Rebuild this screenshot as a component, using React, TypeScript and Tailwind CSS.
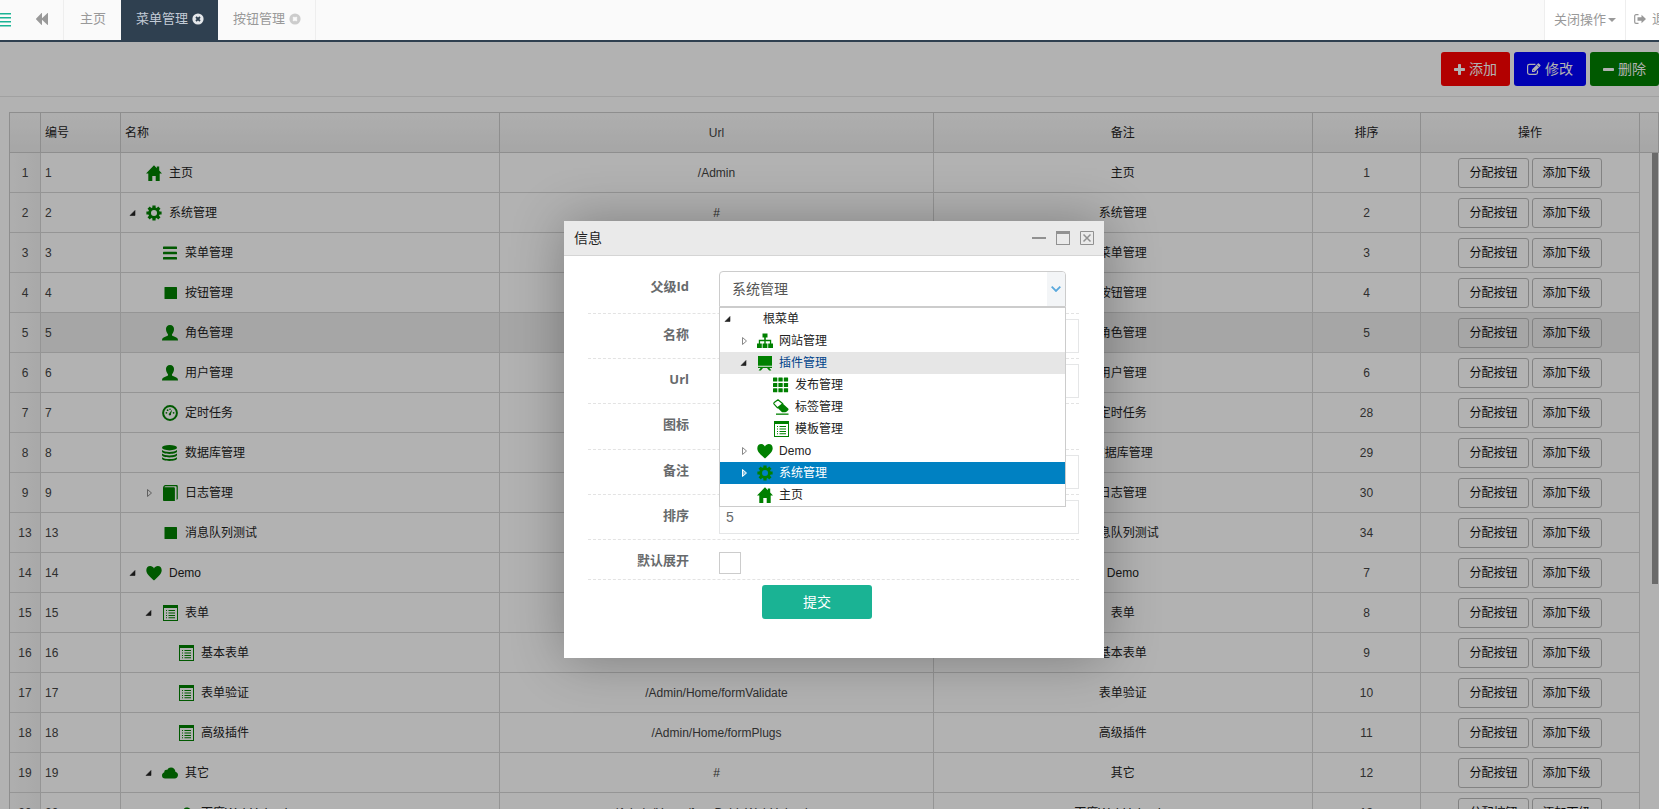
import React from 'react';

type IconName =
  | 'home' | 'cog' | 'menu' | 'stop' | 'user' | 'dashboard' | 'database' | 'book'
  | 'heart' | 'list' | 'cloud' | 'sitemap' | 'board' | 'grid' | 'eraser' | 'none';

type Hit = 'open' | 'closed' | 'none';

const shapes: Record<IconName, React.ReactNode> = {
  none: null,
  home: <path d="M8 .2 0 8.400h2.300V16h4v-5h3.400v5h4V8.400H16L13.200 5.600V1.600h-2.400v1.600z" />,
  cog: (
    <g>
      <circle cx="8" cy="8" r="4.400" fill="none" stroke="currentColor" strokeWidth="2.800" />
      {[0, 45, 90, 135].map((a) => (
        <g key={a} transform={`rotate(${a} 8 8)`}>
          <path d="M6.400.4h3.200v2.800H6.400zM6.400 12.800h3.200v2.800H6.400z" />
        </g>
      ))}
    </g>
  ),
  menu: (
    <g>
      <rect x="1" y="1.500" width="14" height="2.600" rx=".6" />
      <rect x="1" y="6.700" width="14" height="2.600" rx=".6" />
      <rect x="1" y="11.900" width="14" height="2.600" rx=".6" />
    </g>
  ),
  stop: <rect x="2.500" y="2" width="12.500" height="12" rx=".5" />,
  user: (
    <path d="M8 0c2.600 0 4 1.700 4 4.100 0 2-.7 3.800-1.800 4.900-.4.500-.3 1.400.2 1.700 2.300 1.100 5 2 5.300 3 .2.600.3 1.300.3 1.800H0c0-.5.100-1.200.3-1.800.3-1 3-1.900 5.300-3 .5-.3.600-1.200.2-1.700C4.700 7.900 4 6.100 4 4.100 4 1.700 5.400 0 8 0z" />
  ),
  dashboard: (
    <g>
      <circle cx="8" cy="8" r="6.900" fill="none" stroke="currentColor" strokeWidth="2" />
      <circle cx="4.400" cy="7.800" r=".9" />
      <circle cx="5.600" cy="5.200" r=".9" />
      <circle cx="8" cy="4.200" r=".8" />
      <circle cx="11.600" cy="7.800" r=".9" />
      <path d="M10.200 4.400 9 8.800a1.200 1.200 0 1 1-1.700-.6z" />
    </g>
  ),
  database: (
    <g>
      <ellipse cx="7.500" cy="2.700" rx="7.500" ry="2.700" />
      <path d="M0 5c1.200 1.300 4.300 1.900 7.500 1.900S13.800 6.300 15 5v1.500c0 1.400-3.200 2.400-7.500 2.400S0 7.900 0 6.500zM0 8.600c1.200 1.300 4.300 1.900 7.500 1.900s6.300-.6 7.500-1.900v1.500c0 1.400-3.200 2.400-7.500 2.400S0 11.500 0 10.100zM0 12.200c1.200 1.300 4.300 1.900 7.500 1.900s6.300-.6 7.500-1.900v1.400c0 1.400-3.200 2.400-7.500 2.400S0 15 0 13.600z" />
    </g>
  ),
  book: (
    <path d="M3.500 0H14.500c1 0 1.300.6 1.300 1.500V14l-1.200 1V2.500c0-.8-.4-1.200-1.100-1.200H3.600c-.6 0-.9.400-1.200.9h9.300c.7 0 1.200.5 1.200 1.200V16H2.200C1.400 16 1 15.500 1 14.700V3c0-1.500 1-3 2.500-3z" />
  ),
  heart: (
    <path d="M8 15.500C5 12.400.3 9.500.3 5.200.3 2.700 2 1.100 4.200 1.100c1.700 0 3 .9 3.800 2.300.8-1.400 2.100-2.300 3.800-2.300 2.200 0 3.900 1.600 3.900 4.100 0 4.300-4.700 7.200-7.700 10.300z" />
  ),
  list: (
    <path
      fillRule="evenodd"
      d="M1 0h15v16H1zm1 3v12h13V3zM4 5h1v1H4zm2.500 0H13v1H6.500zM4 7.500h1v1H4zm2.500 0H13v1H6.500zM4 10h1v1H4zm2.500 0H13v1H6.500zM4 12.300h1v1H4zm2.500 0H13v1H6.500z"
    />
  ),
  cloud: (
    <path d="M3.300 13.500A3.200 3.200 0 0 1 0 10.300c0-1.500 1-2.700 2.300-3.100-.1-1.700 1.300-2.700 2.800-2.200C6 3.300 7.400 2.500 9 2.500c2.500 0 4.300 1.900 4.400 4.300 1.500.3 2.600 1.600 2.600 3.300 0 1.900-1.500 3.400-3.300 3.400z" />
  ),
  sitemap: (
    <path d="M5.500.5h5v4H8.800v2.300h5.400v3.700H16V15h-4.800v-4.500h1.700V8.200H8.700v2.300h1.700V15H5.600v-4.500h1.700V8.200H3.100v2.300h1.700V15H0v-4.500h1.800V6.800h5.400V4.500H5.500z" />
  ),
  board: (
    <path d="M1 1h14v9.800H1zM1 11.800h14V13h-2.600l2 2.500h-2.300L10 13H6l-2.100 2.500H1.600l2-2.500H1z" />
  ),
  grid: (
    <g>
      {[0.500, 5.900, 11.300].map((y) =>
        [0, 5.400, 10.800].map((x) => <rect key={`${x}-${y}`} x={x} y={y} width="4.300" height="4" rx=".5" />)
      )}
    </g>
  ),
  eraser: (
    <g>
      <path d="M5 .8 1.200 3.600q-.8.700-.1 1.500L4.500 8.800l5.300-4z" fill="none" stroke="currentColor" strokeWidth="1.200" strokeLinejoin="round" />
      <path d="m9.900 4.800 5.300 4.700q.8.900 0 1.700l-1.700 1.600q-.5.400-1.200.4H9.700q-.7 0-1.200-.5l-4-3.900z" />
      <path d="M3 14.500h12.500v1.300H3z" />
    </g>
  ),
};

function Icon({ name }: { name: IconName }) {
  return (
    <svg viewBox="0 0 16 16" className="size-4 shrink-0 text-[#008000]" fill="currentColor" aria-hidden="true">
      {shapes[name]}
    </svg>
  );
}

function Expander({ state, light = false }: { state: Hit; light?: boolean }) {
  return (
    <svg viewBox="0 0 16 16" className="size-4 shrink-0" aria-hidden="true">
      {state === 'open' && <path d="M10 5.500v5H5z" fill="#222" stroke="#222" strokeWidth=".6" />}
      {state === 'closed' && (
        <path d="M6.500 4.500v7L10.500 8z" fill={light ? '#7fc0e0' : '#fff'} stroke={light ? '#fff' : '#888'} />
      )}
    </svg>
  );
}

const indents = ['pl-0', 'pl-4', 'pl-8'];

interface Row {
  id: number;
  level: number;
  hit: Hit;
  icon: IconName;
  name: string;
  url: string;
  order: number;
}

const rows: Row[] = [
  { id: 1, level: 0, hit: 'none', icon: 'home', name: '主页', url: '/Admin', order: 1 },
  { id: 2, level: 0, hit: 'open', icon: 'cog', name: '系统管理', url: '#', order: 2 },
  { id: 3, level: 1, hit: 'none', icon: 'menu', name: '菜单管理', url: '', order: 3 },
  { id: 4, level: 1, hit: 'none', icon: 'stop', name: '按钮管理', url: '', order: 4 },
  { id: 5, level: 1, hit: 'none', icon: 'user', name: '角色管理', url: '', order: 5 },
  { id: 6, level: 1, hit: 'none', icon: 'user', name: '用户管理', url: '', order: 6 },
  { id: 7, level: 1, hit: 'none', icon: 'dashboard', name: '定时任务', url: '', order: 28 },
  { id: 8, level: 1, hit: 'none', icon: 'database', name: '数据库管理', url: '', order: 29 },
  { id: 9, level: 1, hit: 'closed', icon: 'book', name: '日志管理', url: '', order: 30 },
  { id: 13, level: 1, hit: 'none', icon: 'stop', name: '消息队列测试', url: '', order: 34 },
  { id: 14, level: 0, hit: 'open', icon: 'heart', name: 'Demo', url: '', order: 7 },
  { id: 15, level: 1, hit: 'open', icon: 'list', name: '表单', url: '', order: 8 },
  { id: 16, level: 2, hit: 'none', icon: 'list', name: '基本表单', url: '', order: 9 },
  { id: 17, level: 2, hit: 'none', icon: 'list', name: '表单验证', url: '/Admin/Home/formValidate', order: 10 },
  { id: 18, level: 2, hit: 'none', icon: 'list', name: '高级插件', url: '/Admin/Home/formPlugs', order: 11 },
  { id: 19, level: 1, hit: 'open', icon: 'cloud', name: '其它', url: '#', order: 12 },
  { id: 20, level: 2, hit: 'none', icon: 'cloud', name: '百度WebUploader', url: '/Admin/Home/formBaiduWebUploader', order: 13 },
];

interface Node {
  level: number;
  hit: Hit;
  icon: IconName;
  name: string;
  state?: 'hover' | 'selected';
}

const nodes: Node[] = [
  { level: 0, hit: 'open', icon: 'none', name: '根菜单' },
  { level: 1, hit: 'closed', icon: 'sitemap', name: '网站管理' },
  { level: 1, hit: 'open', icon: 'board', name: '插件管理', state: 'hover' },
  { level: 2, hit: 'none', icon: 'grid', name: '发布管理' },
  { level: 2, hit: 'none', icon: 'eraser', name: '标签管理' },
  { level: 2, hit: 'none', icon: 'list', name: '模板管理' },
  { level: 1, hit: 'closed', icon: 'heart', name: 'Demo' },
  { level: 1, hit: 'closed', icon: 'cog', name: '系统管理', state: 'selected' },
  { level: 1, hit: 'none', icon: 'home', name: '主页' },
];

function TopBar() {
  return (
    <header className="relative z-10 flex h-[42px] shrink-0 border-b-2 border-[#2f4050] bg-[#fafafa] text-[13px] text-[#999]">
      <button aria-label="菜单" className="flex w-6 items-center">
        <svg viewBox="0 0 11 14" className="h-[14px] w-[11px]" fill="#1ab394" aria-hidden="true">
          <path d="M0 0h11v1.500H0zM0 4h11v1.500H0zM0 8h11v1.500H0zM0 12h11v1.500H0z" />
        </svg>
      </button>
      <button aria-label="向左" className="flex w-10 items-center justify-center border-r border-[#eee] pb-[2px] pr-1">
        <svg viewBox="0 0 12 12" className="size-3" fill="#999" aria-hidden="true">
          <path d="M6 .5v4.700L11.300.3c.4-.4.700-.3.700.2v11c0 .5-.3.600-.7.200L6 6.800v4.700c0 .5-.3.600-.7.200L0 6.300v-.6L5.300.3c.4-.4.700-.3.700.2z" />
        </svg>
      </button>
      <nav className="flex min-w-0 flex-1">
        <a href="#home" className="flex items-center pb-[2px] pl-4 pr-[15px]">主页</a>
        <a href="#menus" className="flex items-center gap-1 bg-[#2f4050] pb-[2px] pl-[15px] pr-[14px] text-[#c3cbd6]">
          菜单管理
          <svg viewBox="0 0 12 12" className="size-3" aria-hidden="true">
            <circle cx="6" cy="6" r="5.600" fill="#e4e7ea" />
            <path d="m4 4 4 4M8 4 4 8" stroke="#2f4050" strokeWidth="1.800" />
          </svg>
        </a>
        <a href="#buttons" className="flex items-center gap-1 border-r border-[#eee] pb-[2px] pl-[15px] pr-[14px]">
          按钮管理
          <svg viewBox="0 0 12 12" className="size-3" aria-hidden="true">
            <circle cx="6" cy="6" r="5.600" fill="#ccc" />
            <path d="m4.200 4.200 3.600 3.600M7.800 4.200 4.200 7.800" stroke="#fafafa" strokeWidth="2" />
          </svg>
        </a>
      </nav>
      <button className="flex w-[81px] shrink-0 items-center justify-center gap-[2px] border-l border-[#eee] bg-white">
        关闭操作
        <svg viewBox="0 0 8 4" className="h-1 w-2" fill="#999" aria-hidden="true">
          <path d="M0 0h8L4 4z" />
        </svg>
      </button>
      <a href="#logout" className="flex w-[34px] shrink-0 items-center gap-[6px] overflow-hidden whitespace-nowrap border-l border-[#eee] bg-white pb-[2px] pl-2">
        <svg viewBox="0 0 12 10" className="h-[10px] w-3 shrink-0" aria-hidden="true">
          <path d="M4.500.7H2C1.200.7.700 1.200.700 2v6c0 .8.500 1.300 1.300 1.300h2.500" fill="none" stroke="#999" strokeWidth="1.200" />
          <path d="M7.500.8 12 5 7.500 9.200V6.800h-4V3.200h4z" fill="#999" />
        </svg>
        退出
      </a>
    </header>
  );
}

const toolButton = 'flex h-[34px] items-center gap-1 rounded-[3px] px-[13px] text-[14px] text-white';

function Toolbar() {
  return (
    <div className="flex justify-end gap-1 border-b border-[#e7e7e7] py-[10px]">
      <button className={`${toolButton} bg-[#ff0000]`}>
        <svg viewBox="0 0 11 11" className="size-[11px]" fill="currentColor" aria-hidden="true">
          <path d="M4.800 0h1.400q.8 0 .8.800V4h3.200q.8 0 .8.800v1.400q0 .8-.8.800H7v3.200q0 .8-.8.800H4.800q-.8 0-.8-.8V7H.8Q0 7 0 6.200V4.800Q0 4 .8 4H4V.8q0-.8.800-.8z" />
        </svg>
        添加
      </button>
      <button className={`${toolButton} bg-[#0000ff]`}>
        <svg viewBox="0 0 14 12" className="h-3 w-[14px]" fill="none" stroke="currentColor" aria-hidden="true">
          <path d="M10.500 7.500v2q0 1.800-1.800 1.800H2.400Q.6 11.300.6 9.500V3.200Q.6 1.400 2.400 1.400h6" strokeWidth="1.200" />
          <path d="M5 9V6.400L10.900.5q.5-.5 1 0l1.500 1.500q.5.500 0 1L7.500 9z" fill="currentColor" stroke="none" />
          <path d="m6 6.800 1.400 1.400M10 2.200l1.900 1.900" stroke="#0000ff" strokeWidth=".7" />
        </svg>
        修改
      </button>
      <button className={`${toolButton} bg-[#008000]`}>
        <svg viewBox="0 0 11 11" className="size-[11px]" fill="currentColor" aria-hidden="true">
          <rect y="4" width="11" height="3" rx=".8" />
        </svg>
        删除
      </button>
    </div>
  );
}

const headCell = 'border-b border-r border-[#ccc] px-1 font-normal';
const bodyCell = 'border-b border-r border-[#d6d6d6] px-1';
const rowButton = 'h-[30px] rounded-[3px] border border-[#bbb] px-[10px] text-[#111]';

function MenuTable() {
  return (
    <div className="relative ml-[9px] mt-[15px]">
      <table className="w-full table-fixed border-separate border-spacing-0 border-l border-t border-[#ccc] text-[12px] text-[#222]">
        <colgroup>
          <col className="w-[31px]" />
          <col className="w-20" />
          <col className="w-[23%]" />
          <col />
          <col className="w-[23%]" />
          <col className="w-[108px]" />
          <col className="w-[219px]" />
          <col className="w-[19px]" />
        </colgroup>
        <thead className="bg-linear-to-b from-[#fafafa] to-[#eee]">
          <tr className="h-10">
            <th className={headCell} />
            <th className={`${headCell} text-left`}>编号</th>
            <th className={`${headCell} text-left`}>名称</th>
            <th className={`${headCell} text-[#444]`}>Url</th>
            <th className={headCell}>备注</th>
            <th className={headCell}>排序</th>
            <th className={headCell}>操作</th>
            <th className={headCell} />
          </tr>
        </thead>
        <tbody>
          {rows.map((r) => (
            <tr key={r.id} className={r.id === 5 ? 'h-10 bg-[#eee]' : 'h-10'}>
              <td className={`${bodyCell} bg-linear-to-r from-[#fafafa] to-[#f2f2f2] text-center text-[#444]`}>{r.id}</td>
              <td className={`${bodyCell} text-[#444]`}>{r.id}</td>
              <td className={bodyCell}>
                <div className={indents[r.level]}>
                  <div className="flex items-center">
                    <Expander state={r.hit} />
                    <span className="ml-[5px] mr-[7px]"><Icon name={r.icon} /></span>
                    {r.name}
                  </div>
                </div>
              </td>
              <td className={`${bodyCell} text-center text-[#444]`}>{r.url}</td>
              <td className={`${bodyCell} text-center`}>{r.name}</td>
              <td className={`${bodyCell} text-center text-[#444]`}>{r.order}</td>
              <td className={bodyCell}>
                <div className="flex justify-center gap-[3px]">
                  <button className={rowButton}>分配按钮</button>
                  <button className={rowButton}>添加下级</button>
                </div>
              </td>
              <td className="bg-white" />
            </tr>
          ))}
        </tbody>
      </table>
      <div className="absolute right-px top-[41px] h-[431px] w-[6px] bg-[#999]" />
    </div>
  );
}

function ParentCombo() {
  return (
    <div className="relative w-[347px] pb-px">
      <div className="flex h-9 overflow-hidden rounded-t-[4px] border border-[#ccc] bg-white">
        <input
          id="parent"
          role="combobox"
          aria-expanded="true"
          aria-controls="parent-tree"
          defaultValue="系统管理"
          className="min-w-0 flex-1 px-3 text-[14px] text-[#555] outline-none"
        />
        <button type="button" aria-label="展开" className="flex w-[18px] items-center justify-center bg-[#f3f5f7]">
          <svg viewBox="0 0 10 6" className="h-[6px] w-[10px]" fill="none" stroke="#5aa9dd" strokeWidth="1.800" aria-hidden="true">
            <path d="m.7.700 4.300 4.300L9.300.7" />
          </svg>
        </button>
      </div>
      <ul id="parent-tree" role="tree" className="absolute left-0 top-9 z-10 w-full border border-[#ccc] bg-white text-[12px] text-[#222]">
        {nodes.map((n) => (
          <li
            key={n.name}
            role="treeitem"
            aria-selected={n.state === 'selected'}
            className={
              n.state === 'selected'
                ? 'bg-[#0081c2] text-white'
                : n.state === 'hover'
                  ? 'bg-[#e6e6e6] text-[#00438a]'
                  : ''
            }
          >
            <div className={indents[n.level]}>
              <div className="flex h-[22px] items-center pb-px">
                <Expander state={n.hit} light={n.state === 'selected'} />
                <span className="ml-[5px] mr-[6px]"><Icon name={n.icon} /></span>
                {n.name}
              </div>
            </div>
          </li>
        ))}
      </ul>
    </div>
  );
}

function Field({ id, label, children }: { id: string; label: string; children: React.ReactNode }) {
  return (
    <div className="mb-[5px] flex gap-[30px] border-b border-dashed border-[#e3e3e3] pb-[5px]">
      <label
        htmlFor={id}
        className="w-[101px] shrink-0 pt-[6px] text-right font-['Open_Sans','Noto_Sans_CJK_SC',sans-serif] text-[13px] font-bold leading-[18px] text-[#676a6c]"
      >
        {label}
      </label>
      <div className="min-w-0 flex-1">{children}</div>
    </div>
  );
}

const textInput = 'block h-[34px] w-full border border-[#e5e6e7] bg-white px-[6px] text-[14px] text-[#676a6c] outline-none';

function Dialog() {
  return (
    <section
      role="dialog"
      aria-labelledby="dialog-title"
      className="absolute left-[34%] top-[179px] w-[540px] bg-white shadow-[1px_1px_50px_rgba(0,0,0,0.3)]"
    >
      <div className="flex h-[35px] items-center justify-between border-b border-[#d5d5d5] bg-[#eaeaea] px-[10px]">
        <h2 id="dialog-title" className="text-[14px] text-[#222]">信息</h2>
        <div className="flex gap-[10px] text-[#919191]">
          <button type="button" aria-label="最小化">
            <svg viewBox="0 0 14 14" className="size-[14px]" fill="currentColor"><path d="M0 6h14v2H0z" /></svg>
          </button>
          <button type="button" aria-label="最大化">
            <svg viewBox="0 0 14 14" className="size-[14px]" fill="currentColor"><path fillRule="evenodd" d="M0 0h14v14H0zm1 3v10h12V3z" /></svg>
          </button>
          <button type="button" aria-label="关闭">
            <svg viewBox="0 0 14 14" className="size-[14px]" fill="none" stroke="currentColor">
              <path d="M.5.5h13v13H.5z" />
              <path d="m3.500 3.500 7 7M10.500 3.500l-7 7" strokeWidth="1.500" />
            </svg>
          </button>
        </div>
      </div>
      <form className="pb-[39px] pl-6 pr-[25px] pt-[15px]" onSubmit={(e) => e.preventDefault()}>
        <Field id="parent" label="父级Id"><ParentCombo /></Field>
        <Field id="name" label="名称"><input id="name" className={textInput} /></Field>
        <Field id="url" label="Url"><input id="url" className={textInput} /></Field>
        <Field id="icon" label="图标">
          <button type="button" id="icon" aria-label="图标" className="block h-[35px] w-10" />
        </Field>
        <Field id="remark" label="备注"><input id="remark" className={textInput} /></Field>
        <Field id="order" label="排序"><input id="order" defaultValue="5" className={textInput} /></Field>
        <Field id="expand" label="默认展开">
          <input id="expand" type="checkbox" className="mt-[7px] block size-[22px] appearance-none border border-[#ccc] bg-white" />
        </Field>
        <button className="ml-[174px] block h-[34px] w-[110px] rounded-[3px] bg-[#1ab394] text-[14px] text-white">提交</button>
      </form>
    </section>
  );
}

export default function App() {
  return (
    <div className="flex h-screen flex-col overflow-hidden bg-white font-['Liberation_Sans','Noto_Sans_CJK_SC',sans-serif]">
      <TopBar />
      <main className="relative min-h-0 flex-1 overflow-hidden">
        <Toolbar />
        <MenuTable />
        <div className="absolute inset-0 bg-black/30" />
        <Dialog />
      </main>
    </div>
  );
}
